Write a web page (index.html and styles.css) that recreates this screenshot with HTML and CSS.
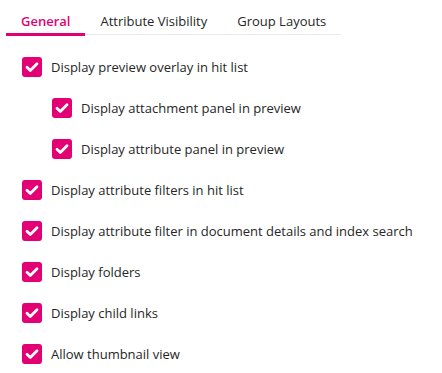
FILE: index.html
```html
<!DOCTYPE html>
<html>
<head>
<meta charset="utf-8">
<link rel="stylesheet" href="styles.css">
</head>
<body>
<div class="page">
  <div class="tabs">
    <div class="tab active">General</div>
    <div class="tab">Attribute Visibility</div>
    <div class="tab">Group Layouts</div>
  </div>
  <div class="options">
    <label class="opt"><span class="box"><svg viewBox="0 0 20 20"><path d="M5 10.2l3.3 3.3 6.7-6.7"/></svg></span>Display preview overlay in hit list</label>
    <label class="opt sub"><span class="box"><svg viewBox="0 0 20 20"><path d="M5 10.2l3.3 3.3 6.7-6.7"/></svg></span>Display attachment panel in preview</label>
    <label class="opt sub"><span class="box"><svg viewBox="0 0 20 20"><path d="M5 10.2l3.3 3.3 6.7-6.7"/></svg></span>Display attribute panel in preview</label>
    <label class="opt"><span class="box"><svg viewBox="0 0 20 20"><path d="M5 10.2l3.3 3.3 6.7-6.7"/></svg></span>Display attribute filters in hit list</label>
    <label class="opt"><span class="box"><svg viewBox="0 0 20 20"><path d="M5 10.2l3.3 3.3 6.7-6.7"/></svg></span>Display attribute filter in document details and index search</label>
    <label class="opt"><span class="box"><svg viewBox="0 0 20 20"><path d="M5 10.2l3.3 3.3 6.7-6.7"/></svg></span>Display folders</label>
    <label class="opt"><span class="box"><svg viewBox="0 0 20 20"><path d="M5 10.2l3.3 3.3 6.7-6.7"/></svg></span>Display child links</label>
    <label class="opt"><span class="box"><svg viewBox="0 0 20 20"><path d="M5 10.2l3.3 3.3 6.7-6.7"/></svg></span>Allow thumbnail view</label>
  </div>
</div>
</body>
</html>
```
FILE: styles.css
```css
html, body {
  margin: 0;
  padding: 0;
  background: #fff;
}
body {
  font-family: "Open Sans", "Noto Sans", sans-serif;
  color: #262626;
}
.page {
  padding: 11px 0 0 6px;
}
.tabs {
  display: flex;
  width: fit-content;
  border-bottom: 1px solid #ececec;
}
.tab {
  flex: none;
  white-space: nowrap;
  padding: 0 15px 2px;
  font-size: 13px;
  line-height: 20px;
  color: #262626;
  border-bottom: 3px solid transparent;
  margin-bottom: -2px;
}
.tab.active {
  color: #e20074;
  font-weight: 600;
  border-bottom-color: #e20074;
}
.options {
  display: flex;
  flex-direction: column;
  gap: 21px;
  padding: 22px 0 0 16px;
}
.opt {
  display: flex;
  align-items: center;
  gap: 9px;
  font-size: 13px;
  line-height: 20px;
  height: 20px;
  white-space: nowrap;
}
.opt.sub {
  padding-left: 30px;
}
.box {
  width: 20px;
  height: 20px;
  border-radius: 3px;
  background: #e20074;
  display: flex;
  flex: none;
}
.box svg {
  width: 20px;
  height: 20px;
  fill: none;
  stroke: #fff;
  stroke-width: 2.8;
  stroke-linecap: round;
  stroke-linejoin: round;
}
```
